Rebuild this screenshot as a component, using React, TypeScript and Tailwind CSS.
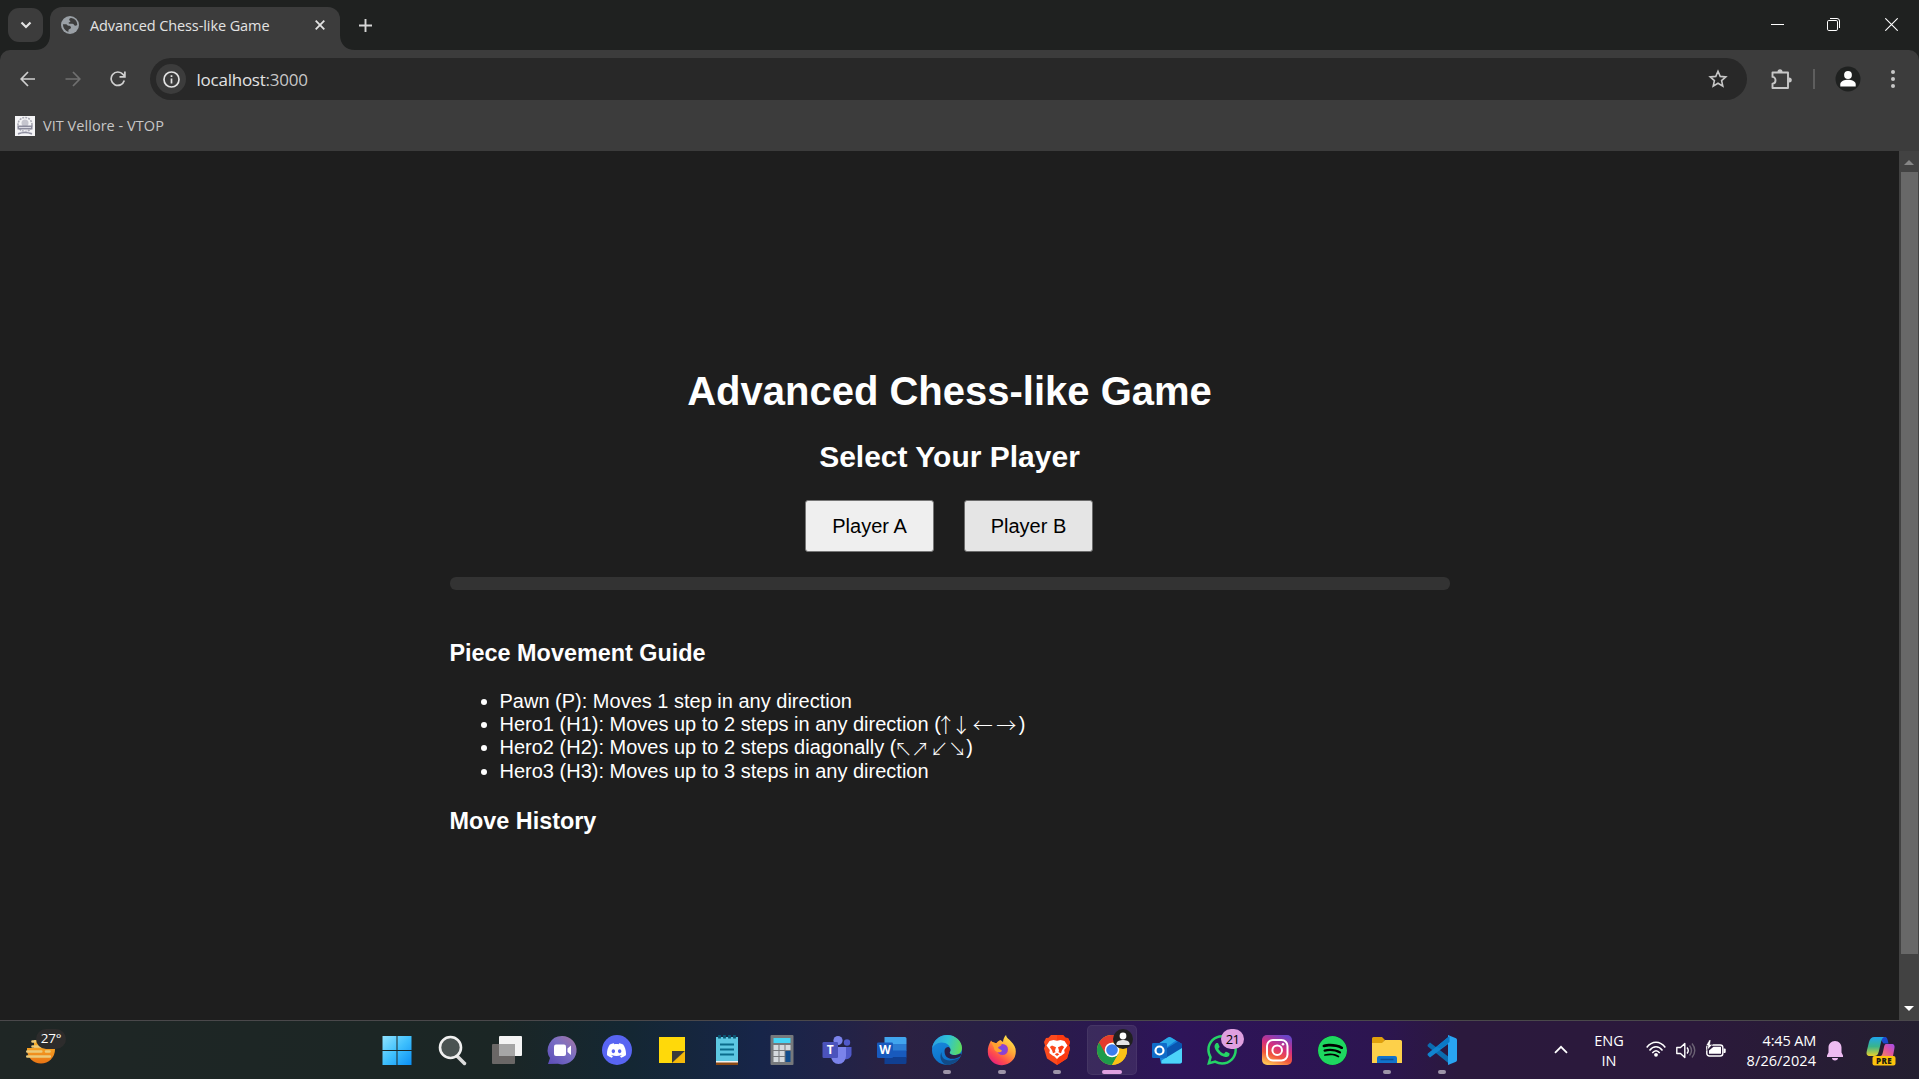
import type { ReactNode } from "react";
import { SiDiscord, SiWhatsapp, SiSpotify } from "react-icons/si";

function Svg({ children, size = 30 }: { children: ReactNode; size?: number }) {
  return (
    <svg width={size} height={size} viewBox={`0 0 ${size} ${size}`} fill="none" className="block shrink-0 overflow-visible">
      {children}
    </svg>
  );
}

function TabStrip() {
  return (
    <div className="flex h-[50px] items-start bg-[#1f2120]">
      <div className="mt-2 ml-2 flex h-[34px] w-[35px] items-center justify-center rounded-[11px] bg-[#3c3c3c]">
        <svg width="12" height="8" viewBox="0 0 12 8" fill="none">
          <path d="M1.5 1.5 6 6l4.500-4.500" stroke="#e3e3e3" strokeWidth="2.200" />
        </svg>
      </div>
      <div className="relative mt-[7px] ml-[7px] flex h-[43px] w-[290px] items-center rounded-t-[12px] bg-[#3c3c3c] pb-[7px]">
        <svg width="15" height="15" viewBox="0 0 15 15" className="absolute bottom-0 -left-[15px]">
          <path d="M15 0v15H0C9 15 15 9 15 0z" fill="#3c3c3c" />
        </svg>
        <svg width="15" height="15" viewBox="0 0 15 15" className="absolute -right-[15px] bottom-0">
          <path d="M0 0v15h15C6 15 0 9 0 0z" fill="#3c3c3c" />
        </svg>
        <svg width="18" height="18" viewBox="0 0 18 18" fill="none" className="mt-[-1px] ml-[11px]">
          <circle cx="9" cy="9" r="9" fill="#9aa0a6" />
          <path d="M10.300 2 9 2.200C8 3.200 7.800 4 9 4.700c.8.400.3 1.300-.6 1.500-1.200.3-1 1.500.3 1.500h2.600c1.800 0 1.700 2 3 2 .8 0 1.600-.4 2-.9A7.200 7.200 0 0 0 10.300 2zM1.900 8.300C2 12 4 15 7.400 16v-1.800c0-1 2.600-1.200 2.600-2.700 0-1.300-1.100-1.800-2.400-1.800-1.700 0-1.200-1.400-2.600-1.400z" fill="#3c3c3c" />
        </svg>
        <span className="mt-px ml-[11px] w-[205px] font-['Open_Sans','Noto_Sans',sans-serif] text-[14.500px] leading-5 tracking-[-0.090px] whitespace-nowrap text-[#e3e3e3]">
          Advanced Chess-like Game
        </span>
        <svg width="10" height="10" viewBox="0 0 10 10" className="ml-5">
          <path d="M.7.700l8.600 8.600M9.300.7.700 9.300" stroke="#e3e3e3" strokeWidth="1.800" />
        </svg>
      </div>
      <svg width="13" height="13" viewBox="0 0 13 13" className="mt-[18.500px] ml-[19px]">
        <path d="M6.500 0v13M0 6.500h13" stroke="#d6d6d6" strokeWidth="1.900" />
      </svg>
      <div className="mt-[18px] mr-[21px] ml-auto flex items-start gap-[43px]">
        <svg width="13" height="13" viewBox="0 0 13 13">
          <path d="M0 6.500h13" stroke="#fff" />
        </svg>
        <svg width="13" height="13" viewBox="0 0 13 13" fill="none">
          <rect x=".5" y="2.500" width="10" height="10" rx="1.300" stroke="#fff" />
          <path d="M3 .5h7a2.500 2.500 0 0 1 2.500 2.500v7" stroke="#fff" />
        </svg>
        <svg width="13" height="13" viewBox="0 0 13 13" className="ml-[2px]">
          <path d="M.3.300l12.400 12.400M12.700.3.300 12.700" stroke="#fff" strokeWidth="1.100" />
        </svg>
      </div>
    </div>
  );
}

function Toolbar() {
  return (
    <div className="bg-[#1f2120]">
      <div className="flex h-[58px] items-center rounded-t-[10px] bg-[#3c3c3c]">
        <svg width="16" height="16" viewBox="0 0 16 16" fill="none" className="ml-5">
          <path d="M15 8H1.500M8 1 1.200 8 8 15" stroke="#d0d0d0" strokeWidth="1.700" />
        </svg>
        <svg width="16" height="16" viewBox="0 0 16 16" fill="none" className="ml-[29px]">
          <path d="M.5 8h14M8 1l6.800 7L8 15" stroke="#707070" strokeWidth="1.700" />
        </svg>
        <svg width="16" height="16" viewBox="0 0 16 16" fill="none" className="ml-[29px]">
          <path d="M14.300 9.600A6.700 6.700 0 1 1 13 3.400L14.500 5M14.900.5v5.400H9.500" stroke="#d0d0d0" strokeWidth="1.700" />
        </svg>
        <div className="ml-6 flex h-[42px] w-[1597px] items-center rounded-full bg-[#282828]">
          <div className="ml-[6px] flex size-[30px] items-center justify-center rounded-full bg-[#3c3c3c]">
            <svg width="17" height="17" viewBox="0 0 17 17" fill="none">
              <circle cx="8.500" cy="8.500" r="7.500" stroke="#e3e3e3" strokeWidth="1.700" />
              <path d="M8.500 7.500v5M8.500 4.300v1.800" stroke="#e3e3e3" strokeWidth="1.700" />
            </svg>
          </div>
          <span className="mt-px ml-[10.500px] font-['Open_Sans','Noto_Sans',sans-serif] text-[17px] leading-6 tracking-[-0.240px] text-[#e3e3e3]">
            localhost<span className="text-[#c7c7c7]">:3000</span>
          </span>
          <svg width="20" height="20" viewBox="0 0 20 20" fill="none" className="mr-[19.500px] ml-auto">
            <path d="M10 2.300 12.200 7.400l5.600.5-4.200 3.700 1.200 5.500L10 14.200l-4.800 2.900 1.200-5.500-4.200-3.700 5.600-.5z" stroke="#c7c7c7" strokeWidth="1.600" />
          </svg>
        </div>
        <svg width="21" height="21" viewBox="0 0 21 21" fill="none" className="ml-6">
          <path d="M1.500 3.500h15.500v15.500H1.500v-4.300c4 0 4-6.800 0-6.800z" stroke="#c7c7c7" strokeWidth="1.900" strokeLinejoin="round" />
          <path d="M6.500 3a2.500 2.800 0 0 1 5 0zM18 8.500a2.800 2.500 0 0 1 0 5z" fill="#c7c7c7" />
        </svg>
        <div className="ml-[21px] h-5 w-0.5 bg-[#5e5e5e]" />
        <svg width="26" height="26" viewBox="0 0 26 26" className="ml-[19.500px]">
          <circle cx="13" cy="13" r="12.500" fill="#1f2120" />
          <circle cx="13" cy="9" r="3.900" fill="#fff" />
          <path d="M5.300 20.500v-2.300c0-3 4.500-4.400 7.700-4.400s7.700 1.400 7.700 4.400v2.300z" fill="#fff" />
        </svg>
        <svg width="4" height="18" viewBox="0 0 4 18" className="ml-[30px]">
          <circle cx="2" cy="2" r="2" fill="#c7c7c7" />
          <circle cx="2" cy="9" r="2" fill="#c7c7c7" />
          <circle cx="2" cy="16" r="2" fill="#c7c7c7" />
        </svg>
      </div>
      <div className="flex h-[43px] items-center bg-[#3c3c3c] pb-[7px] pl-[15px]">
        <svg width="20" height="20" viewBox="0 0 20 20" fill="none">
          <path d="M0 0h20v20H0z" fill="#f4f4f6" />
          <circle cx="10" cy="8.500" r="7" stroke="#a9a9b4" strokeWidth="1.600" strokeDasharray="2 1" />
          <circle cx="10" cy="7" r="3.500" fill="#c5c5ce" />
          <path d="M2.500 9.500h15v4h-15z" fill="#8b8b9c" />
          <path d="M4 11.500h12M3 17q7-2.500 14 0" stroke="#d9d9e2" strokeWidth="1.200" />
          <path d="M3 18q7-3 14 0" stroke="#8f8fa0" strokeWidth="1.500" />
        </svg>
        <span className="ml-2 font-['Open_Sans','Noto_Sans',sans-serif] text-[14.500px] leading-5 tracking-[0.040px] text-[#c7c7c7]">VIT Vellore - VTOP</span>
      </div>
    </div>
  );
}

function Arrow({ char, width }: { char: string; width: string }) {
  return (
    <span className={`inline-flex h-[23px] justify-center align-top font-['Noto_Sans_CJK_SC','DejaVu_Sans',sans-serif] font-light leading-[24px] ${width}`}>
      {char}
    </span>
  );
}

function GamePage() {
  return (
    <div className="flex h-[869px] bg-[#1e1e1e]">
      <main className="flex flex-1 flex-col items-center pt-[217px] font-['Liberation_Sans',Arial,sans-serif] text-white">
        <h1 className="text-[40px] leading-[46px] font-bold">Advanced Chess-like Game</h1>
        <h2 className="mt-[26px] text-[30px] leading-[34px] font-bold">Select Your Player</h2>
        <div className="mt-[26px] mr-px flex gap-[30px]">
          <button className="h-[52px] w-[129px] rounded-[3px] border border-[#767676] bg-[#efefef] text-[20px] text-black">Player A</button>
          <button className="h-[52px] w-[129px] rounded-[3px] border border-[#6b6b6b] bg-[#e5e5e5] text-[20px] text-black">Player B</button>
        </div>
        <div className="mt-[25px] h-[13px] w-[1000px] rounded-[6px] bg-[#333]" />
        <section className="mt-[50px] w-[1000px]">
          <h3 className="text-[23.400px] leading-[27px] font-bold">Piece Movement Guide</h3>
          <ul className="mt-[23px] list-disc pl-[50px] text-[20px] leading-[23.200px]">
            <li>Pawn (P): Moves 1 step in any direction</li>
            <li>
              Hero1 (H1): Moves up to 2 steps in any direction (
              <Arrow char="↑" width="w-[10px] text-[20px]" />
              <Arrow char="↓" width="w-[21px] text-[20px]" />
              <Arrow char="←" width="w-[22px] text-[20px]" />
              <Arrow char="→" width="w-[25px] text-[20px]" />)
            </li>
            <li>
              Hero2 (H2): Moves up to 2 steps diagonally (
              <Arrow char="↖" width="w-[14px] text-[18px]" />
              <Arrow char="↗" width="w-[20px] text-[18px]" />
              <Arrow char="↙" width="w-[18px] text-[18px]" />
              <Arrow char="↘" width="w-[18px] text-[18px]" />)
            </li>
            <li>Hero3 (H3): Moves up to 3 steps in any direction</li>
          </ul>
          <h3 className="mt-[25px] text-[23.400px] leading-[27px] font-bold">Move History</h3>
        </section>
      </main>
      <div className="flex w-5 flex-col items-center bg-[#424242]">
        <svg width="10" height="5" viewBox="0 0 10 5" className="mt-[9px] shrink-0">
          <path d="M0 5 5 0l5 5z" fill="#868686" />
        </svg>
        <div className="mt-[7px] ml-px h-[782px] w-[17px] bg-[#686868]" />
        <svg width="10" height="5" viewBox="0 0 10 5" className="mt-auto mb-[9px] shrink-0">
          <path d="m0 0 5 5 5-5z" fill="#fff" />
        </svg>
      </div>
    </div>
  );
}

const WindowsIcon = () => (
  <Svg>
    <defs>
      <linearGradient id="win" x1="0" y1="0" x2="1" y2="1">
        <stop stopColor="#8fe3ff" />
        <stop offset=".5" stopColor="#3fc0fd" />
        <stop offset="1" stopColor="#0a8ff5" />
      </linearGradient>
    </defs>
    <path d="M.5 1h14v14H.5zM15.500 1h14v14h-14zM.5 16h14v14H.5zM15.500 16h14v14h-14z" fill="url(#win)" />
  </Svg>
);

const SearchIcon = () => (
  <Svg>
    <path d="m20 21 7.500 7.500" stroke="#dcdcdc" strokeWidth="3.500" strokeLinecap="round" />
    <circle cx="13.500" cy="12.500" r="10.500" fill="#4a5352" stroke="#f0f0f0" strokeWidth="2.600" />
  </Svg>
);

const TaskViewIcon = () => (
  <Svg>
    <rect x="7" y="1" width="23" height="20" rx="1" fill="#f4f4f4" />
    <rect x="0" y="9" width="23" height="20" rx="1" fill="#6a6766" />
    <path d="M7 9h16v12H7z" fill="#a6a6a6" />
  </Svg>
);

const ChatIcon = () => (
  <Svg>
    <defs>
      <linearGradient id="chat" x1="1" y1="0" x2="0" y2="1">
        <stop stopColor="#a774a0" />
        <stop offset=".45" stopColor="#7a6fc4" />
        <stop offset="1" stopColor="#5a4bb8" />
      </linearGradient>
    </defs>
    <path d="M15 1a14.200 14.200 0 1 1-4 27.700L1 29l2-6A14.200 14.200 0 0 1 15 1z" fill="url(#chat)" />
    <rect x="7" y="9.500" width="12" height="11.500" rx="2" fill="#fff" />
    <path d="m20.500 13.500 3.500-3v9.500l-3.500-3z" fill="#fff" />
  </Svg>
);

const DiscordIcon = () => (
  <span className="flex size-[30px] items-center justify-center rounded-full bg-[#5865f2]">
    <SiDiscord size={19} color="#fff" />
  </span>
);

const StickyNotesIcon = () => (
  <Svg>
    <path d="M2 2h26v14L15 28H2z" fill="#ffd90a" />
    <path d="M15 28V16h13z" fill="#3a3a3a" />
    <path d="M15 28 28 16v12z" fill="#f5b90a" />
  </Svg>
);

const NotepadIcon = () => (
  <Svg>
    <path d="M4 26h22v4H4z" fill="#8d4a14" />
    <path d="M4 24h22v3.500H4z" fill="#f1f1f1" />
    <path d="M4 2h22v24H4z" fill="#5cc7e2" />
    <path d="M8 9.500h14M8 14.500h14M8 19.500h14" stroke="#0a6c8c" strokeWidth="2" />
    <path d="M7.500 0v3.500M12.500 0v3.500M17.500 0v3.500M22.500 0v3.500" stroke="#0a5672" strokeWidth="2.800" />
  </Svg>
);

const CalculatorIcon = () => (
  <Svg>
    <rect x="3.500" y="0" width="23" height="30" rx="1" fill="#76797c" />
    <path d="M6.500 3h17v5h-17z" fill="#45d5f5" />
    <path d="M6.500 10h5v5h-5zM12.500 10h5v5h-5zM18.500 10h5v5h-5zM6.500 16h5v5h-5zM12.500 16h5v5h-5zM6.500 22h5v5h-5zM12.500 22h5v5h-5z" fill="#d5dade" />
    <path d="M18.500 16h5v11h-5z" fill="#114d8d" />
  </Svg>
);

const TeamsIcon = () => (
  <Svg>
    <circle cx="25" cy="7.500" r="3.200" fill="#5059c9" />
    <path d="M20 12h9.500v8a6 6 0 0 1-9.500 3z" fill="#5059c9" />
    <circle cx="16" cy="5.500" r="4.600" fill="#7b83eb" />
    <path d="M9 12h15v9a7.500 8 0 0 1-15 0z" fill="#7b83eb" />
    <rect x="0.500" y="7" width="15.500" height="16" rx="1.300" fill="#4b53bc" />
    <text x="8.200" y="19.300" textAnchor="middle" fontFamily="Open Sans" fontWeight="700" fontSize="12" fill="#fff">T</text>
  </Svg>
);

const WordIcon = () => (
  <Svg>
    <path d="M7.500 2H28a1.500 1.500 0 0 1 1.500 1.500V9h-22z" fill="#41a5ee" />
    <path d="M7.500 9h22v7h-22z" fill="#2b7cd3" />
    <path d="M7.500 15.500h22v7h-22z" fill="#185abd" />
    <path d="M7.500 22h22v5.500A1.500 1.500 0 0 1 28 29H7.500z" fill="#103f91" />
    <rect x="0" y="7.500" width="16" height="15.500" rx="1.300" fill="#185abd" />
    <text x="8" y="19.300" textAnchor="middle" fontFamily="Open Sans" fontWeight="700" fontSize="12" fill="#fff">W</text>
  </Svg>
);

const EdgeIcon = () => (
  <Svg>
    <defs>
      <linearGradient id="edgeTop" x1="0" y1=".3" x2="1" y2=".5">
        <stop stopColor="#2b9de0" />
        <stop offset=".5" stopColor="#2fc3d6" />
        <stop offset="1" stopColor="#5fdc5c" />
      </linearGradient>
      <linearGradient id="edgeLeft" x1="0" y1="0" x2=".4" y2="1">
        <stop stopColor="#1b8ee0" />
        <stop offset="1" stopColor="#0b6fc8" />
      </linearGradient>
    </defs>
    <circle cx="15" cy="15" r="15" fill="url(#edgeLeft)" />
    <path d="M9.500 17C9 25 16 28 27.500 23 24.500 27.800 19 30 15 30 9 28.500 7 22 9.500 17z" fill="#124a86" />
    <path d="M0 14C1 5 8 0 15 0c9 0 15 6.500 15 13 0 5-4 7-7.500 7-3 0-5-1-5-2.200 0-1 1-1.500 1-3.300C18.500 11 15 7.500 9.500 7.500 5 7.500 1 10.500 0 14z" fill="url(#edgeTop)" />
    <path d="M12.500 16c0-2.500 2-4 4-4 1.500 1 2 2 2 3.200 0 1.300-1.500 2-.5 3.300 2 2 6 2 10.500 0 1 .5.500 2-.5 3-4 2.500-8.500 3-11.500 1.500C13.500 22 12.500 19 12.500 16z" fill="#281f48" />
  </Svg>
);

const FirefoxIcon = () => (
  <Svg>
    <defs>
      <linearGradient id="ff" x1=".85" y1="0" x2=".15" y2="1">
        <stop stopColor="#fff44f" />
        <stop offset=".4" stopColor="#ffa436" />
        <stop offset=".7" stopColor="#ff4f4a" />
        <stop offset="1" stopColor="#e31587" />
      </linearGradient>
      <radialGradient id="ffCore">
        <stop stopColor="#6a4fe8" />
        <stop offset="1" stopColor="#9b3cc8" />
      </radialGradient>
    </defs>
    <path d="M4 5.500 6.500 8h3C10.500 6.500 12 5.500 13.500 5L16 7c.2-3 1.500-5.500 3-7 .4 3 3 4 5 6.500 3 3 5 6 4.800 10A14 13.500 0 0 1 .8 17C.5 12.500 2 9 4 5.500z" fill="url(#ff)" />
    <circle cx="15.500" cy="14.500" r="5.500" fill="url(#ffCore)" />
    <path d="M4 7c3 0 4 .5 5.500 2l5 .2c.5 1.800-3 2-3.500 3.300.5 1.800 3 1.500 4 3.200-2 3-8 1.300-8-3z" fill="#ffa02f" />
  </Svg>
);

const BraveIcon = () => (
  <Svg>
    <path d="M9 0h12l2.500 2.800 2.500.2 2 4-1 3.500 1 3L25 23.500 15 30 5 23.500 2 13.500l1-3L2 7l2-4 2.500-.2z" fill="#fb4a1e" />
    <path d="M15 0h6l2.500 2.800 2.500.2 2 4-1 3.500 1 3L25 23.500 15 30z" fill="#fb3a10" />
    <path d="M15 5.800 11.500 5 7.500 6 4.500 10.500l3.300 4.500-.5 3 3.200 2.500 2 1L15 24l2.500-2.500 2-1 3.200-2.500-.5-3 3.300-4.500L22.500 6l-4-1zM10 10.500l4 1.700-1 3.300.5 1.800-2.500.9-1-3L7.800 12zm10 0 2.200 1.500-2.200 3.200-1 3-2.500-.9.500-1.800-1-3.300zM15 18l2.300 1.300L15 21l-2.300-1.700z" fill="#fff" fillRule="evenodd" />
  </Svg>
);

const ChromeIcon = () => (
  <Svg>
    <circle cx="15" cy="15" r="15" fill="#fbc116" />
    <path d="M15 15 2 7.500A15 15 0 0 0 15 30l6.500-11.200z" fill="#1e9c4b" />
    <path d="M2 7.500A15 15 0 0 1 28 7.500H15l-6.500 11.300z" fill="#e33b2e" />
    <path d="M15 7.700h13.200A15 15 0 0 1 15 30l6.500-11.200z" fill="#fbc116" />
    <circle cx="15" cy="15" r="7.300" fill="#fff" />
    <circle cx="15" cy="15" r="5.800" fill="#3b7ded" />
    <circle cx="26" cy="4" r="10" fill="#202020" />
    <circle cx="26" cy="1" r="3.400" fill="#fff" />
    <path d="M19.500 10V8.500c0-2.500 4-3.500 6.500-3.500s6.500 1 6.500 3.500V10z" fill="#e4e4e4" />
  </Svg>
);

const OutlookIcon = () => (
  <Svg>
    <path d="M5 10 16 2.500a3 3 0 0 1 3 0L30 9v17.500a2 2 0 0 1-2 2H9z" fill="#1480d8" />
    <path d="M5 9.500 16 2.500a3 3 0 0 1 3 0l5 3L12 14z" fill="#2ba9e8" />
    <path d="m12 15 14-8.500L30 9v5L14 24z" fill="#0a55b0" />
    <path d="m30 13-20.500 12.500v3H28a2 2 0 0 0 2-2z" fill="#4cd3fa" />
    <rect x="0" y="8" width="15" height="15" rx="1.300" fill="#0f6cc9" />
    <circle cx="7.500" cy="15.500" r="4" stroke="#fff" strokeWidth="2.200" />
  </Svg>
);

const WhatsAppIcon = () => (
  <span className="relative block size-[30px]">
    <SiWhatsapp size={30} color="#25d366" />
    <span className="absolute -top-[6px] left-[14px] flex h-5 w-[23px] items-center justify-center rounded-full bg-[#dfa0e0] font-['Open_Sans',sans-serif] text-[13px] leading-none tracking-[-0.800px] text-black">
      21
    </span>
  </span>
);

const InstagramIcon = () => (
  <Svg>
    <defs>
      <linearGradient id="ig" x1=".3" y1="1" x2=".7" y2="0">
        <stop stopColor="#fec053" />
        <stop offset=".3" stopColor="#f2553c" />
        <stop offset=".6" stopColor="#d62f80" />
        <stop offset="1" stopColor="#6a45c8" />
      </linearGradient>
    </defs>
    <rect width="30" height="30" rx="5" fill="url(#ig)" />
    <rect x="5" y="5" width="20.500" height="20.500" rx="6" stroke="#fff" strokeWidth="2" />
    <circle cx="15.200" cy="15.200" r="4.800" stroke="#fff" strokeWidth="2" />
    <circle cx="21" cy="9.300" r="1.300" fill="#fff" />
  </Svg>
);

const SpotifyIcon = () => (
  <span className="flex size-[29px] items-center justify-center rounded-full bg-black">
    <SiSpotify size={29} color="#1ed760" />
  </span>
);

const ExplorerIcon = () => (
  <Svg>
    <path d="M0 3.500A1.500 1.500 0 0 1 1.500 2H10l3 3-3 4H0z" fill="#e0a00c" />
    <path d="M0 8h10l3-3h15.500A1.500 1.500 0 0 1 30 6.500V28H0z" fill="#fdd04a" />
    <path d="M5 28v-5a2 2 0 0 1 2-2h16a2 2 0 0 1 2 2v5z" fill="#1173cc" />
    <path d="M8.500 24.500h13" stroke="#0b4f97" strokeWidth="1.500" />
  </Svg>
);

const VsCodeIcon = () => (
  <Svg>
    <path d="m.5 10 2.500-2.500 19.500 15V29L.8 11.500z" fill="#0b6cb0" />
    <path d="m.5 20 2.500 2.500L22.500 8V1L.8 18.500z" fill="#1184cf" />
    <path d="M21 0v30l8-3.300A2 2 0 0 0 30 25V5a2 2 0 0 0-1-1.700z" fill="#29a4f2" />
    <path d="M14 13.500 22.500 7V1L9.500 12z" fill="#0b79c6" />
  </Svg>
);

type TaskbarApp = { name: string; icon: ReactNode; running?: boolean; active?: boolean };

const apps: TaskbarApp[] = [
  { name: "Start", icon: <WindowsIcon /> },
  { name: "Search", icon: <SearchIcon /> },
  { name: "Task View", icon: <TaskViewIcon /> },
  { name: "Chat", icon: <ChatIcon /> },
  { name: "Discord", icon: <DiscordIcon /> },
  { name: "Sticky Notes", icon: <StickyNotesIcon /> },
  { name: "Notepad", icon: <NotepadIcon /> },
  { name: "Calculator", icon: <CalculatorIcon /> },
  { name: "Teams", icon: <TeamsIcon /> },
  { name: "Word", icon: <WordIcon /> },
  { name: "Edge", icon: <EdgeIcon />, running: true },
  { name: "Firefox", icon: <FirefoxIcon />, running: true },
  { name: "Brave", icon: <BraveIcon />, running: true },
  { name: "Chrome", icon: <ChromeIcon />, running: true, active: true },
  { name: "Outlook", icon: <OutlookIcon /> },
  { name: "WhatsApp", icon: <WhatsAppIcon /> },
  { name: "Instagram", icon: <InstagramIcon /> },
  { name: "Spotify", icon: <SpotifyIcon /> },
  { name: "Explorer", icon: <ExplorerIcon />, running: true },
  { name: "VS Code", icon: <VsCodeIcon />, running: true },
];

function AppButton({ app }: { app: TaskbarApp }) {
  return (
    <div className="flex w-[55.040px] justify-center pt-[4px]">
      <div className={`flex h-[50px] w-[50px] flex-col items-center rounded-[5px] pt-[10px] ${app.active ? "bg-white/8 ring-1 ring-white/5 ring-inset" : ""}`}>
        <div className="flex h-[30px] items-center">{app.icon}</div>
        {app.running && <div className={`mt-[5px] h-1 rounded-full ${app.active ? "w-5 bg-[#dfa0e0]" : "w-2 bg-[#9d94a8]"}`} />}
      </div>
    </div>
  );
}

function SystemTray() {
  return (
    <div className="ml-auto flex h-[58px] items-start font-['Open_Sans','Noto_Sans',sans-serif] text-[14.500px] leading-5 text-white">
      <svg width="14" height="9" viewBox="0 0 14 9" fill="none" className="mt-[24px]">
        <path d="M1 7.800 7 1.800l6 6" stroke="#fff" strokeWidth="1.800" />
      </svg>
      <div className="mt-[10px] ml-[21px] w-10 text-center tracking-[-0.050px]">
        ENG
        <br />
        IN
      </div>
      <svg width="20" height="16" viewBox="0 0 20 16" fill="none" className="mt-[20px] ml-[17px]">
        <path d="M.7 6.500C6-.5 14-.5 19.300 6.500M3.500 9.500c4-5 9-5 13 0M6.300 12c2.500-3 5-3 7.400 0" stroke="#fff" strokeWidth="1.500" />
        <circle cx="10" cy="13.800" r="1.900" fill="#fff" />
      </svg>
      <svg width="20" height="17" viewBox="0 0 20 17" fill="none" className="mt-[21px] ml-[10px]">
        <path d="M.8 5.500h3.700L8.800 1.500v14L4.500 11.500H.8z" stroke="#fff" strokeWidth="1.400" strokeLinejoin="round" />
        <path d="M11 5.500q2.500 3 0 6" stroke="#fff" strokeWidth="1.400" />
        <path d="M13.500 3.500q4 5 0 10M16 1.500q5.500 7 0 14" stroke="#6b6274" strokeWidth="1.400" />
      </svg>
      <svg width="20" height="17" viewBox="0 0 20 17" fill="none" className="mt-[19px] ml-[10px]">
        <rect x=".8" y="5" width="16" height="11" rx="2.500" stroke="#fff" strokeWidth="1.400" />
        <path d="M3 13.800V10.500L7.500 6.700H15v7.100z" fill="#fff" />
        <path d="M17.500 8.500h1.200a1 1 0 0 1 1 1V12a1 1 0 0 1-1 1h-1.200z" fill="#fff" />
        <path d="M3.500-.5 0 5.500h2L1 10.500l5.500-6H4L5 0z" fill="#fff" stroke="#2a1b38" strokeWidth=".6" />
      </svg>
      <div className="mt-[10px] ml-[10px] w-20 text-right whitespace-nowrap">
        <div className="tracking-[-0.180px]">4:45 AM</div>
        <div className="tracking-[0.080px]">8/26/2024</div>
      </div>
      <svg width="16" height="20" viewBox="0 0 16 20" className="mt-[20px] ml-[11px]">
        <path d="M8 0c4 0 6.500 3 6.500 6.500v5L16 14.500V16H0v-1.500l1.500-3v-5C1.500 3 4 0 8 0zM5 17h6c0 1.500-1.200 2.500-3 2.500S5 18.500 5 17z" fill="#eebcf2" />
      </svg>
      <svg width="30" height="29" viewBox="0 0 30 29" fill="none" className="mt-[16px] mr-[23px] ml-[23px]">
        <defs>
          <linearGradient id="coA" x1="0" y1="0" x2="0" y2="1">
            <stop stopColor="#1fa6ee" />
            <stop offset=".5" stopColor="#39b48b" />
            <stop offset="1" stopColor="#e8d02c" />
          </linearGradient>
          <linearGradient id="coB" x1="1" y1="0" x2="0" y2="1">
            <stop stopColor="#a04df0" />
            <stop offset=".5" stopColor="#e0559c" />
            <stop offset="1" stopColor="#f5895c" />
          </linearGradient>
        </defs>
        <path d="M13 0h6c2 0 2.500 2 3.500 6.500h-5z" fill="#1b49cf" />
        <path d="M8.500 0H18c-2 1-2.500 3-3.200 6l-2 8.500C12 17.500 11 19 8 19H4c-3 0-4-1.500-3.200-5L3 5C4 1.500 5.500 0 8.500 0z" fill="url(#coA)" />
        <path d="M20 7h5.500c3 0 3.500 2 2.800 5l-1.300 7H14c2 0 2.500-2 3.200-5l.8-4c.5-2 1-3 2-3z" fill="url(#coB)" />
        <rect x="6.500" y="19" width="23" height="9.500" rx="2" fill="#fdc30d" />
        <text x="18" y="26.500" textAnchor="middle" fontFamily="Open Sans" fontWeight="800" fontSize="8" letterSpacing=".4" fill="#201a10">PRE</text>
      </svg>
    </div>
  );
}

function Taskbar() {
  return (
    <div className="flex h-[59px] items-start border-t border-[#4a484b] bg-[linear-gradient(90deg,#1f2625_0px,#1b2625_500px,#142733_630px,#172549_760px,#202348_830px,#2b2142_900px,#282044_980px,#2b1850_1100px,#2e1459_1180px,#2c1550_1380px,#2b193d_1460px,#2b193b_1700px,#241f30_1919px)]">
      <div className="relative mt-[8px] ml-[26px] h-[36px] w-[40px]">
        <svg width="40" height="36" viewBox="0 0 40 36" fill="none">
          <defs>
            <linearGradient id="sun" x1="0" y1="0" x2="0" y2="1">
              <stop stopColor="#fcc430" />
              <stop offset="1" stopColor="#ea7414" />
            </linearGradient>
          </defs>
          <circle cx="15" cy="20.500" r="14" fill="url(#sun)" />
          <path d="M0 0h40v11H0z" fill="#1f2625" />
          <path d="M0 10h8v9H0z" fill="#1f2625" />
          <path d="M6.500 12.500H9M6.500 17.500H15M1.300 22.500h14M20 22.500h3.500M1.300 27.500h22.500" stroke="#ecca78" strokeWidth="2.600" strokeLinecap="round" />
        </svg>
        <span className="absolute top-0 left-[10px] flex h-[20px] w-[30px] items-center justify-center rounded-full bg-[#2d2c2c] font-['Open_Sans',sans-serif] text-[13.500px] leading-none tracking-[-0.300px] text-white">
          27°
        </span>
      </div>
      <div className="ml-[303px] flex">
        {apps.map((app) => (
          <AppButton key={app.name} app={app} />
        ))}
      </div>
      <SystemTray />
    </div>
  );
}

export default function App() {
  return (
    <div className="flex h-[1079px] w-[1919px] flex-col overflow-hidden">
      <TabStrip />
      <Toolbar />
      <GamePage />
      <Taskbar />
    </div>
  );
}
